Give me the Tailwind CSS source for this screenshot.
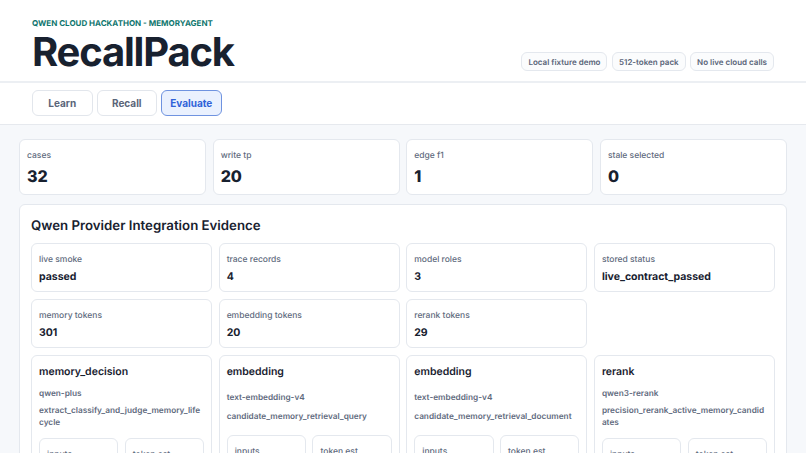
<!DOCTYPE html>
<html lang="en">
<head>
<meta charset="utf-8">
<script src="https://cdn.jsdelivr.net/npm/@tailwindcss/browser@4"></script>
</head>
<body class="h-[453px] overflow-hidden bg-[#f6f8fb] font-['Inter',sans-serif] text-[#18212f] [text-rendering:geometricPrecision]">
<header class="h-[83px] bg-white border-b-2 border-[#eceff3] px-8 pt-[17px] flex justify-between">
  <div>
    <p class="text-[8px] leading-[12px] font-bold text-[#0f766e]">QWEN CLOUD HACKATHON - MEMORYAGENT</p>
    <h1 class="mt-[-1px] text-[40px] leading-[48px] font-bold tracking-[-1.2px]">RecallPack</h1>
  </div>
  <div class="flex gap-[4.5px] mt-[35px] h-[19px]">
    <span class="px-[6px] flex items-center rounded-md border border-[#e4e8ee] bg-[#fbfcfd] text-[8px] font-semibold text-[#5a6579]">Local fixture demo</span>
    <span class="px-[6px] flex items-center rounded-md border border-[#e4e8ee] bg-[#fbfcfd] text-[8px] font-semibold text-[#5a6579]">512-token pack</span>
    <span class="px-[6px] flex items-center rounded-md border border-[#e4e8ee] bg-[#fbfcfd] text-[8px] font-semibold text-[#5a6579]">No live cloud calls</span>
  </div>
</header>
<nav class="h-[42px] bg-white border-b border-[#e6e9ee] px-8 pt-[7px] flex gap-1">
  <button class="w-[60.5px] h-[26px] rounded-md border border-[#e2e6ec] bg-white text-[10px] font-bold text-[#5a6579]">Learn</button>
  <button class="w-[60.5px] h-[26px] rounded-md border border-[#e2e6ec] bg-white text-[10px] font-bold text-[#5a6579]">Recall</button>
  <button class="w-[60.5px] h-[26px] rounded-md border border-[#6f93e0] bg-[#eaf1fe] text-[10px] font-bold text-[#2f62d8]">Evaluate</button>
</nav>
<main class="px-[19px] pt-[14px]">
  <section class="grid grid-cols-4 gap-[6.5px]">
    <div class="h-[56px] rounded-md border border-[#e4e8ee] bg-white px-[7px] pt-[11px]"><p class="text-[8.5px] leading-[11px] font-medium text-[#5f6b7e]">cases</p><p class="mt-[4px] text-[16px] leading-[20px] font-extrabold">32</p></div>
    <div class="h-[56px] rounded-md border border-[#e4e8ee] bg-white px-[7px] pt-[11px]"><p class="text-[8.5px] leading-[11px] font-medium text-[#5f6b7e]">write tp</p><p class="mt-[4px] text-[16px] leading-[20px] font-extrabold">20</p></div>
    <div class="h-[56px] rounded-md border border-[#e4e8ee] bg-white px-[7px] pt-[11px]"><p class="text-[8.5px] leading-[11px] font-medium text-[#5f6b7e]">edge f1</p><p class="mt-[4px] text-[16px] leading-[20px] font-extrabold">1</p></div>
    <div class="h-[56px] rounded-md border border-[#e4e8ee] bg-white px-[7px] pt-[11px]"><p class="text-[8.5px] leading-[11px] font-medium text-[#5f6b7e]">stale selected</p><p class="mt-[4px] text-[16px] leading-[20px] font-extrabold">0</p></div>
  </section>
  <section class="mt-[9px] rounded-md border border-[#e4e8ee] bg-white px-[11px] pt-[11px] pb-4">
    <h2 class="text-[13.25px] leading-[20px] font-semibold">Qwen Provider Integration Evidence</h2>
    <div class="mt-[7px] grid grid-cols-4 gap-x-[6.5px] gap-y-[7px]">
      <div class="h-[49px] rounded-md border border-[#e4e8ee] px-[7px] pt-[11px]"><p class="text-[8.5px] leading-[11px] font-medium text-[#5f6b7e]">live smoke</p><p class="mt-[4px] text-[10.5px] leading-[14px] font-bold">passed</p></div>
      <div class="h-[49px] rounded-md border border-[#e4e8ee] px-[7px] pt-[11px]"><p class="text-[8.5px] leading-[11px] font-medium text-[#5f6b7e]">trace records</p><p class="mt-[4px] text-[10.5px] leading-[14px] font-bold">4</p></div>
      <div class="h-[49px] rounded-md border border-[#e4e8ee] px-[7px] pt-[11px]"><p class="text-[8.5px] leading-[11px] font-medium text-[#5f6b7e]">model roles</p><p class="mt-[4px] text-[10.5px] leading-[14px] font-bold">3</p></div>
      <div class="h-[49px] rounded-md border border-[#e4e8ee] px-[7px] pt-[11px]"><p class="text-[8.5px] leading-[11px] font-medium text-[#5f6b7e]">stored status</p><p class="mt-[4px] text-[10.5px] leading-[14px] font-bold">live_contract_passed</p></div>
      <div class="h-[49px] rounded-md border border-[#e4e8ee] px-[7px] pt-[11px]"><p class="text-[8.5px] leading-[11px] font-medium text-[#5f6b7e]">memory tokens</p><p class="mt-[4px] text-[10.5px] leading-[14px] font-bold">301</p></div>
      <div class="h-[49px] rounded-md border border-[#e4e8ee] px-[7px] pt-[11px]"><p class="text-[8.5px] leading-[11px] font-medium text-[#5f6b7e]">embedding tokens</p><p class="mt-[4px] text-[10.5px] leading-[14px] font-bold">20</p></div>
      <div class="h-[49px] rounded-md border border-[#e4e8ee] px-[7px] pt-[11px]"><p class="text-[8.5px] leading-[11px] font-medium text-[#5f6b7e]">rerank tokens</p><p class="mt-[4px] text-[10.5px] leading-[14px] font-bold">29</p></div>
      <div></div>
      <article class="h-[120px] rounded-md border border-[#e4e8ee] px-[7px] pt-[8px]">
        <h3 class="text-[10.5px] leading-[16px] font-semibold">memory_decision</h3>
        <p class="mt-[8px] text-[8.25px] leading-[11px] font-semibold text-[#5f6b7e]">qwen-plus</p>
        <p class="mt-[6px] text-[8.25px] leading-[11.5px] font-semibold text-[#5f6b7e] break-all">extract_classify_and_judge_memory_lifecycle</p>
        <div class="mt-[9.5px] grid grid-cols-2 gap-[6.5px]"><div class="h-[40px] rounded-md border border-[#e4e8ee] px-[7px] pt-[11px] text-[8.5px] leading-[11px] font-medium text-[#5f6b7e]">inputs</div><div class="h-[40px] rounded-md border border-[#e4e8ee] px-[7px] pt-[11px] text-[8.5px] leading-[11px] font-medium text-[#5f6b7e]">token est</div></div>
      </article>
      <article class="h-[120px] rounded-md border border-[#e4e8ee] px-[7px] pt-[8px]">
        <h3 class="text-[10.5px] leading-[16px] font-semibold">embedding</h3>
        <p class="mt-[12px] text-[8.25px] leading-[11px] font-semibold text-[#5f6b7e]">text-embedding-v4</p>
        <p class="mt-[8px] text-[8.25px] leading-[11.5px] font-semibold text-[#5f6b7e] break-all">candidate_memory_retrieval_query</p>
        <div class="mt-[12.5px] grid grid-cols-2 gap-[6.5px]"><div class="h-[40px] rounded-md border border-[#e4e8ee] px-[7px] pt-[11px] text-[8.5px] leading-[11px] font-medium text-[#5f6b7e]">inputs</div><div class="h-[40px] rounded-md border border-[#e4e8ee] px-[7px] pt-[11px] text-[8.5px] leading-[11px] font-medium text-[#5f6b7e]">token est</div></div>
      </article>
      <article class="h-[120px] rounded-md border border-[#e4e8ee] px-[7px] pt-[8px]">
        <h3 class="text-[10.5px] leading-[16px] font-semibold">embedding</h3>
        <p class="mt-[12px] text-[8.25px] leading-[11px] font-semibold text-[#5f6b7e]">text-embedding-v4</p>
        <p class="mt-[8px] text-[8.25px] leading-[11.5px] font-semibold text-[#5f6b7e] break-all">candidate_memory_retrieval_document</p>
        <div class="mt-[12.5px] grid grid-cols-2 gap-[6.5px]"><div class="h-[40px] rounded-md border border-[#e4e8ee] px-[7px] pt-[11px] text-[8.5px] leading-[11px] font-medium text-[#5f6b7e]">inputs</div><div class="h-[40px] rounded-md border border-[#e4e8ee] px-[7px] pt-[11px] text-[8.5px] leading-[11px] font-medium text-[#5f6b7e]">token est</div></div>
      </article>
      <article class="h-[120px] rounded-md border border-[#e4e8ee] px-[7px] pt-[8px]">
        <h3 class="text-[10.5px] leading-[16px] font-semibold">rerank</h3>
        <p class="mt-[8px] text-[8.25px] leading-[11px] font-semibold text-[#5f6b7e]">qwen3-rerank</p>
        <p class="mt-[6px] text-[8.25px] leading-[11.5px] font-semibold text-[#5f6b7e] break-all">precision_rerank_active_memory_candidates</p>
        <div class="mt-[9.5px] grid grid-cols-2 gap-[6.5px]"><div class="h-[40px] rounded-md border border-[#e4e8ee] px-[7px] pt-[11px] text-[8.5px] leading-[11px] font-medium text-[#5f6b7e]">inputs</div><div class="h-[40px] rounded-md border border-[#e4e8ee] px-[7px] pt-[11px] text-[8.5px] leading-[11px] font-medium text-[#5f6b7e]">token est</div></div>
      </article>
    </div>
  </section>
</main>
</body>
</html>
